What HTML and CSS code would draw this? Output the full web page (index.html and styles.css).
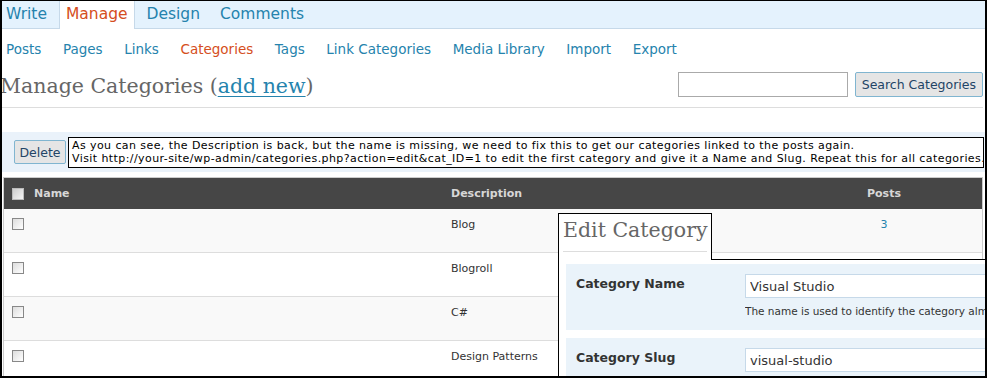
FILE: index.html
```html
<!DOCTYPE html>
<html lang="en">

<head>
    <meta charset="UTF-8">
    <title>Manage Categories</title>
    <link rel="stylesheet" href="styles.css">
</head>

<body>
    <div class="frame">
        <ul class="tabs">
            <li><a href="#">Write</a></li>
            <li class="current"><a href="#">Manage</a></li>
            <li><a href="#">Design</a></li>
            <li><a href="#">Comments</a></li>
        </ul>

        <ul class="submenu">
            <li><a href="#">Posts</a></li>
            <li><a href="#">Pages</a></li>
            <li><a href="#">Links</a></li>
            <li class="current"><a href="#">Categories</a></li>
            <li><a href="#">Tags</a></li>
            <li><a href="#">Link Categories</a></li>
            <li><a href="#">Media Library</a></li>
            <li><a href="#">Import</a></li>
            <li><a href="#">Export</a></li>
        </ul>

        <div class="title-row">
            <h2>Manage Categories (<a href="#">add new</a>)</h2>
            <form class="search-box">
                <input type="text" class="search-input">
                <button type="button" class="button">Search Categories</button>
            </form>
        </div>

        <div class="tablenav">
            <button type="button" class="button">Delete</button>
        </div>

        <div class="cat-table">
            <div class="row head">
                <span class="cell"><span class="check"></span></span>
                <span class="cell">Name</span>
                <span class="cell">Description</span>
                <span class="cell num">Posts</span>
                <span class="cell"></span>
            </div>
            <div class="row alt">
                <span class="cell"><span class="check"></span></span>
                <span class="cell"></span>
                <span class="cell">Blog</span>
                <span class="cell num"><a href="#">3</a></span>
                <span class="cell"></span>
            </div>
            <div class="row">
                <span class="cell"><span class="check"></span></span>
                <span class="cell"></span>
                <span class="cell">Blogroll</span>
                <span class="cell num"></span>
                <span class="cell"></span>
            </div>
            <div class="row alt">
                <span class="cell"><span class="check"></span></span>
                <span class="cell"></span>
                <span class="cell">C#</span>
                <span class="cell num"></span>
                <span class="cell"></span>
            </div>
            <div class="row">
                <span class="cell"><span class="check"></span></span>
                <span class="cell"></span>
                <span class="cell">Design Patterns</span>
                <span class="cell num"></span>
                <span class="cell"></span>
            </div>
        </div>

        <!-- pasted note -->
        <div class="note">
            As you can see, the Description is back, but the name is missing, we need to fix this to get our categories linked to the posts again.<br>
            Visit http://your-site/wp-admin/categories.php?action=edit&amp;cat_ID=1 to edit the first category and give it a Name and Slug. Repeat this for all categories.
        </div>

        <!-- pasted edit screen -->
        <div class="edit-overlay">
            <div class="edit-tab">
                <h2>Edit Category</h2>
            </div>
            <div class="edit-panel">
                <div class="form-row">
                    <label class="form-label">Category Name</label>
                    <div class="form-field">
                        <input type="text" value="Visual Studio">
                        <p class="hint">The name is used to identify the category alm</p>
                    </div>
                </div>
                <div class="form-row">
                    <label class="form-label">Category Slug</label>
                    <div class="form-field">
                        <input type="text" value="visual-studio">
                    </div>
                </div>
            </div>
        </div>
    </div>
</body>

</html>
```

FILE: styles.css
```css
* {
    box-sizing: border-box;
    margin: 0;
    padding: 0;
}

body {
    font-family: 'DejaVu Sans', Verdana, sans-serif;
    background-color: #fff;
}

a {
    color: #2583ad;
    text-decoration: none;
}

.frame {
    position: relative;
    width: 987px;
    height: 378px;
    border: 2px solid #000;
    border-top-width: 1px;
    overflow: hidden;
    background-color: #fff;
}

/* top tabs */
.tabs {
    display: flex;
    list-style: none;
    height: 28px;
    background-color: #e4f2fd;
    border-bottom: 1px solid #c6d9e9;
}

.tabs li {
    padding: 0 6px;
    margin-right: 6px;
    font-size: 15.5px;
    line-height: 27px;
    border: 1px solid transparent;
    border-top: none;
    border-bottom: none;
}

.tabs li:first-child {
    padding-left: 3px;
    margin-right: 5px;
}

.tabs li.current {
    background-color: #fff;
    border-color: #c6d9e9;
    height: 28px;
    margin-right: 5px;
}

.tabs li.current a {
    color: #d54e21;
}

/* sub menu */
.submenu {
    display: flex;
    list-style: none;
    height: 38px;
    padding: 12px 0 0 4px;
}

.submenu li {
    font-size: 13.5px;
    margin-right: 21.6px;
}

.submenu li.current a {
    color: #d54e21;
}

/* title */
.title-row {
    display: flex;
    align-items: flex-start;
    justify-content: space-between;
    height: 41px;
    margin-right: 2px;
    border-bottom: 1px solid #ddd;
}

.title-row h2 {
    font-family: 'DejaVu Serif', Georgia, serif;
    font-weight: normal;
    font-size: 20.5px;
    color: #666;
    margin-left: -2px;
    padding-top: 7px;
    white-space: nowrap;
}

.title-row h2 a {
    text-decoration: underline;
    text-decoration-thickness: 1px;
    text-underline-offset: 3px;
}

.search-box {
    display: flex;
    gap: 7px;
    padding-top: 5px;
}

.search-input {
    width: 170px;
    height: 25px;
    border: 1px solid #aaa;
}

.button {
    height: 25px;
    padding: 0 6px;
    background-color: #e5e5e5;
    border: 1px solid #80b5d0;
    border-radius: 2px;
    color: #246;
    font-family: 'DejaVu Sans', Verdana, sans-serif;
    font-size: 12.5px;
}

/* bulk actions bar */
.tablenav {
    margin-top: 24px;
    height: 40px;
    padding: 8px 0 0 12px;
    background-color: #eaf2fa;
}

.tablenav .button {
    width: 52px;
    height: 24px;
    padding: 0;
}

/* categories table */
.cat-table {
    margin: 5px 2px 0 1px;
    border: 1px solid #ccc;
    border-bottom: none;
    font-size: 11px;
    color: #333;
}

.row {
    display: grid;
    grid-template-columns: 24px 417px 393px 92px 1fr;
    height: 44px;
    border-bottom: 1px solid #ddd;
}

.row.alt {
    background-color: #f9f9f9;
}

.row.head {
    height: 31px;
    background-color: #464646;
    color: #d7d7d7;
    font-weight: bold;
    border-bottom: none;
}

.cell {
    padding: 9px 6px 0;
}

.cell:first-child {
    padding-left: 8px;
}

.num {
    text-align: center;
}

.check {
    display: block;
    width: 12px;
    height: 12px;
    border: 1px solid #888;
    background: linear-gradient(135deg, #ddd, #fff);
}

.row.head .check {
    margin-top: 1px;
    border-color: #bbb;
    background: linear-gradient(135deg, #ccc, #f4f4f4);
}

/* note box laid over the screenshot */
.note {
    position: absolute;
    left: 66px;
    top: 136px;
    width: 916px;
    height: 31px;
    padding: 1px 0 0 3px;
    background-color: #fff;
    border: 1px solid #000;
    font-size: 11px;
    letter-spacing: 0.42px;
    line-height: 13px;
    color: #000;
    white-space: nowrap;
    overflow: hidden;
}

/* edit category screen laid over the table */
.edit-overlay {
    position: absolute;
    left: 556px;
    top: 212px;
    right: 0;
    bottom: 0;
}

.edit-tab {
    position: relative;
    z-index: 1;
    width: 154px;
    height: 47px;
    padding: 0 4px;
    background-color: #fff;
    border: 1px solid #000;
    border-bottom: none;
}

.edit-tab h2 {
    font-family: 'DejaVu Serif', Georgia, serif;
    font-weight: normal;
    font-size: 20.5px;
    color: #666;
    padding-top: 4px;
    height: 38px;
    white-space: nowrap;
    border-bottom: 1px solid #ddd;
}

.edit-panel {
    height: 130px;
    margin-top: -1px;
    padding: 4px 0 0 7px;
    background-color: #fff;
    border-left: 1px solid #000;
    border-top: 1px solid #000;
}

.form-row {
    display: flex;
    height: 66px;
    margin-bottom: 8px;
    background-color: #eaf3fa;
}

.form-label {
    width: 179px;
    padding: 12px 0 0 10px;
    font-size: 12.5px;
    font-weight: bold;
    color: #333;
}

.form-field {
    flex: 1;
    padding-top: 10px;
    white-space: nowrap;
    overflow: hidden;
}

.form-field input {
    width: 300px;
    height: 24px;
    padding: 0 4px;
    border: 1px solid #c6d9e9;
    font-family: 'DejaVu Sans', Verdana, sans-serif;
    font-size: 13px;
    color: #333;
}

.hint {
    margin-top: 7px;
    font-size: 10.5px;
    color: #333;
}
```
